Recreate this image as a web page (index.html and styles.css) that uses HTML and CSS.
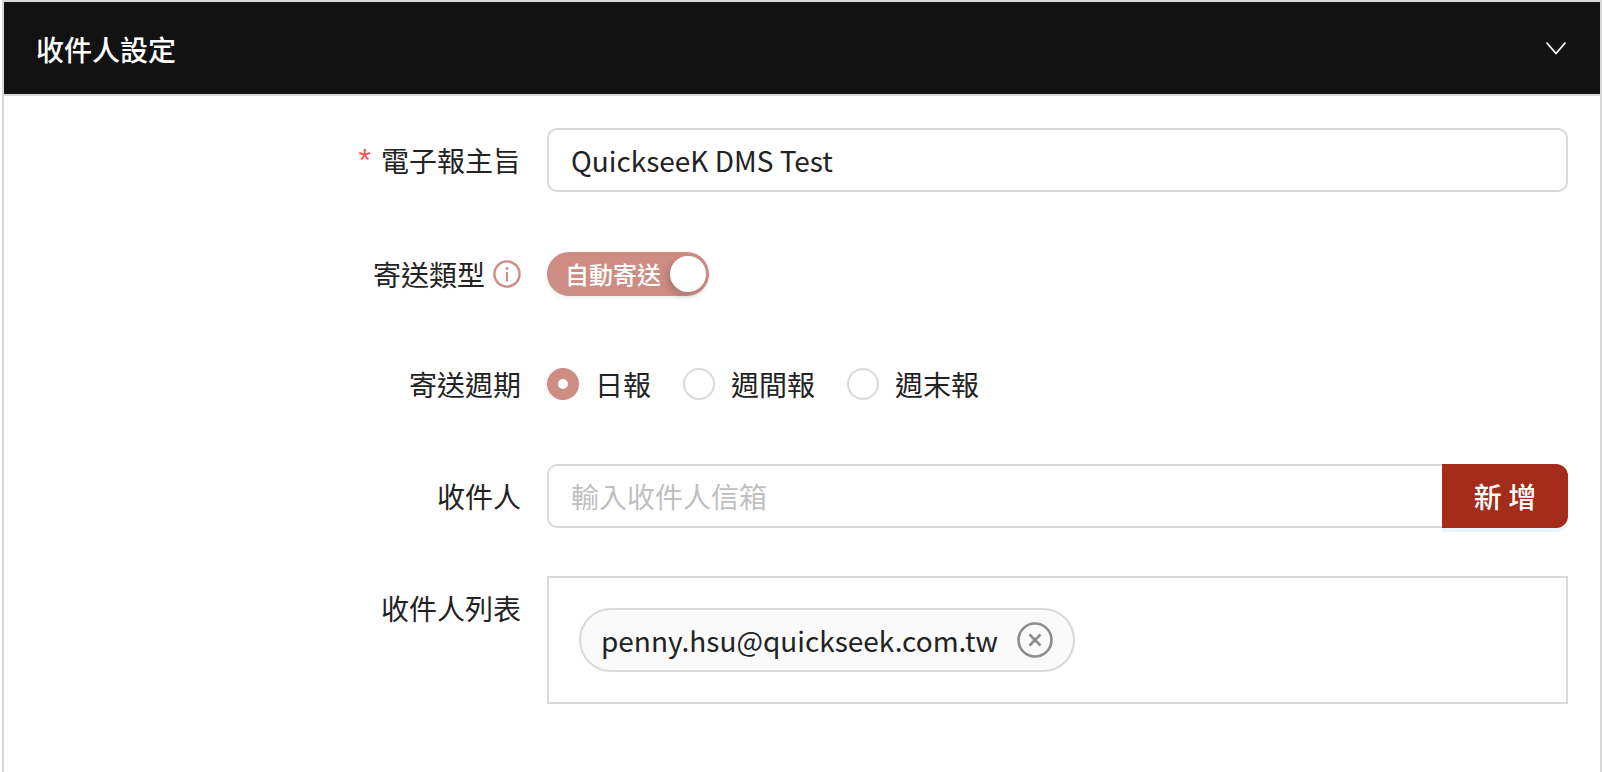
FILE: index.html
```html
<!DOCTYPE html>
<html lang="zh-Hant">
<head>
<meta charset="utf-8">
<title>收件人設定</title>
<link rel="stylesheet" href="styles.css">
</head>
<body>
<section class="panel">
  <header class="panel-head">
    <h2 class="panel-title">收件人設定</h2>
    <svg class="chevron" width="20" height="13" viewBox="0 0 20 13"><path d="M.6.6l9.4 11 9.4-11" fill="none" stroke="#fff" stroke-width="1.6"/></svg>
  </header>
  <form class="form">
    <div class="row row-subject">
      <label class="label"><span class="req">*</span>電子報主旨</label>
      <input class="input subject" value="QuickseeK DMS Test">
    </div>
    <div class="row row-type">
      <label class="label">寄送類型<svg class="info" width="28" height="28" viewBox="0 0 28 28"><circle cx="14" cy="14" r="12.6" fill="none" stroke="#cd8c84" stroke-width="2.4"/><circle cx="14" cy="8.6" r="1.5" fill="#cd8c84"/><path d="M14 12v9.5" stroke="#cd8c84" stroke-width="2"/></svg></label>
      <div class="switch"><span class="switch-text">自動寄送</span><span class="knob"></span></div>
    </div>
    <div class="row row-cycle">
      <label class="label">寄送週期</label>
      <div class="radios">
        <span class="radio"><i class="dot on"></i>日報</span>
        <span class="radio"><i class="dot"></i>週間報</span>
        <span class="radio"><i class="dot"></i>週末報</span>
      </div>
    </div>
    <div class="row row-add">
      <label class="label">收件人</label>
      <div class="group">
        <input class="input add" placeholder="輸入收件人信箱">
        <button class="btn" type="button">新 增</button>
      </div>
    </div>
    <div class="row row-list">
      <label class="label">收件人列表</label>
      <div class="listbox">
        <span class="chip">penny.hsu@quickseek.com.tw<svg class="chip-x" width="36" height="36" viewBox="0 0 36 36"><circle cx="18" cy="18" r="16.5" fill="none" stroke="#8c8c8c" stroke-width="2.6"/><path d="M12.5 12.5l11 11M23.5 12.5l-11 11" stroke="#8c8c8c" stroke-width="2.6"/></svg></span>
      </div>
    </div>
  </form>
</section>
</body>
</html>
```
FILE: styles.css
```css
* { box-sizing: border-box; }
html, body { margin: 0; height: 100%; overflow: hidden; background: #fff; }
body { font-family: "Noto Sans CJK TC", "Noto Sans", sans-serif; color: #222; padding: 0 0 0 2px; }
.panel { height: 772px; border: 2px solid #d9d9d9; border-bottom: 0; background: #fff; }
.panel-head { height: 92px; background: #121212; display: flex; align-items: center; justify-content: space-between; padding: 0 34px 0 32px; box-shadow: 0 2px 0 #d9d9d9; }
.panel-title { margin: 0; font-size: 28px; font-weight: 500; color: #fff; line-height: 1; position: relative; top: 1px; }
.form { display: flex; flex-direction: column; padding-top: 34px; }
.row { display: flex; align-items: center; padding-right: 32px; }
.label { width: 543px; flex: none; font-size: 28px; line-height: 32px; padding-right: 26px; display: flex; justify-content: flex-end; align-items: center; color: #222; }
.req { color: #f5554f; margin-right: 10px; font-family: "Liberation Sans", sans-serif; font-size: 32px; }
.input { border: 2px solid #d9d9d9; border-radius: 10px; height: 64px; font: inherit; font-size: 28px; padding: 0 22px; color: #222; background: #fff; outline: none; }
.input::placeholder { color: #bfbfbf; opacity: 1; }
.subject { flex: 1; min-width: 0; }
.row-type { margin-top: 60px; }
.info { margin-left: 8px; }
.switch { width: 162px; height: 44px; border-radius: 22px; background: #cd8c84; position: relative; color: #fff; font-size: 24px; font-weight: 500; display: flex; align-items: center; padding-left: 18px; box-shadow: 0 2px 4px rgba(0,0,0,.08); }
.switch-text { line-height: 44px; }
.knob { position: absolute; right: 3px; top: 4px; width: 36px; height: 36px; border-radius: 50%; background: #fff; box-shadow: -3px 3px 6px rgba(0,0,0,.15); }
.row-cycle { margin-top: 72px; }
.radios { display: flex; gap: 32px; font-size: 28px; }
.radio { display: flex; align-items: center; gap: 16px; line-height: 32px; }
.dot { width: 32px; height: 32px; border-radius: 50%; border: 2px solid #d9d9d9; background: #fff; flex: none; }
.dot.on { border: 11px solid #cd8c84; }
.row-add { margin-top: 64px; }
.group { flex: 1; display: flex; min-width: 0; }
.add { flex: 1; min-width: 0; border-radius: 10px 0 0 10px; border-right: 0; }
.btn { width: 126px; height: 64px; border: 0; border-radius: 0 12px 12px 0; background: #a42c1a; color: #fff; font: inherit; font-size: 28px; font-weight: 500; box-shadow: 0 4px 0 #e9f4fc; }
.row-list { margin-top: 48px; align-items: flex-start; }
.row-list .label { padding-top: 16px; }
.listbox { flex: 1; height: 128px; border: 2px solid #d9d9d9; padding: 30px; }
.chip { display: inline-flex; align-items: center; height: 64px; border: 2px solid #d9d9d9; border-radius: 32px; background: #fafafa; padding: 0 20px; font-size: 28px; gap: 19px; }
```
